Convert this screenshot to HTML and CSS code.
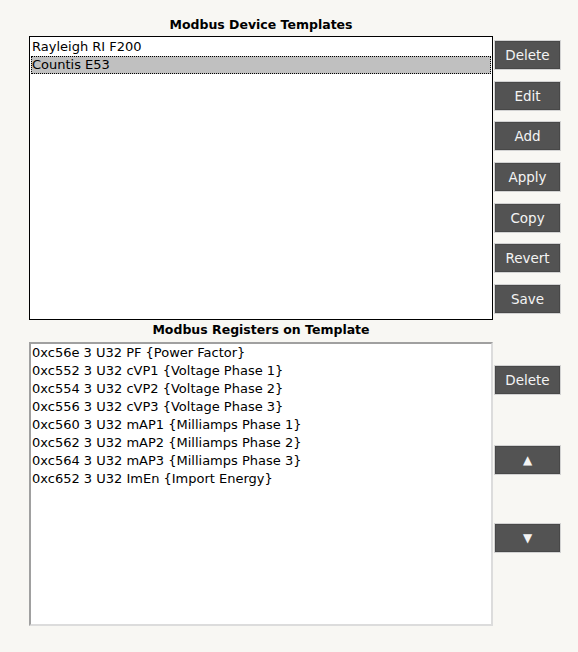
FILE: index.html
```html
<!DOCTYPE html>
<html>
<head>
<meta charset="utf-8">
<link rel="stylesheet" href="styles.css">
</head>
<body>
<div class="page">
  <div class="section">
    <div class="left">
      <div class="title">Modbus Device Templates</div>
      <div class="list list-focus tall1">
        <div class="item">Rayleigh RI F200</div>
        <div class="item selected">Countis E53</div>
      </div>
    </div>
    <div class="buttons b1">
      <button class="btn">Delete</button>
      <button class="btn">Edit</button>
      <button class="btn">Add</button>
      <button class="btn">Apply</button>
      <button class="btn">Copy</button>
      <button class="btn">Revert</button>
      <button class="btn">Save</button>
    </div>
  </div>
  <div class="section">
    <div class="left">
      <div class="title t2">Modbus Registers on Template</div>
      <div class="list list-inset tall2">
        <div class="item">0xc56e 3 U32 PF {Power Factor}</div>
        <div class="item">0xc552 3 U32 cVP1 {Voltage Phase 1}</div>
        <div class="item">0xc554 3 U32 cVP2 {Voltage Phase 2}</div>
        <div class="item">0xc556 3 U32 cVP3 {Voltage Phase 3}</div>
        <div class="item">0xc560 3 U32 mAP1 {Milliamps Phase 1}</div>
        <div class="item">0xc562 3 U32 mAP2 {Milliamps Phase 2}</div>
        <div class="item">0xc564 3 U32 mAP3 {Milliamps Phase 3}</div>
        <div class="item">0xc652 3 U32 ImEn {Import Energy}</div>
      </div>
    </div>
    <div class="buttons b2">
      <button class="btn">Delete</button>
      <button class="btn arrow">&#9650;</button>
      <button class="btn arrow">&#9660;</button>
    </div>
  </div>
</div>
</body>
</html>
```

FILE: styles.css
```css
html, body {
  margin: 0;
  padding: 0;
  background: #f8f7f3;
  font-family: "DejaVu Sans", Verdana, sans-serif;
  font-size: 13px;
  color: #000;
}
.page {
  padding: 15px 0 0 29px;
}
.section {
  display: flex;
  align-items: flex-start;
}
.left {
  width: 464px;
  display: flex;
  flex-direction: column;
}
.title {
  font-weight: bold;
  text-align: center;
  font-size: 12.5px;
  line-height: 20px;
  height: 21px;
}
.t2 {
  height: 21px;
  line-height: 17px;
  padding-top: 1px;
}
.list {
  box-sizing: border-box;
  background: #fff;
  padding: 1px 1px;
}
.list-focus {
  border: 1px solid #000;
}
.list-inset {
  border: 2px solid #dcdcdc;
  border-top-color: #a0a0a0;
  border-left-color: #a0a0a0;
  padding: 0 0;
}
.tall1 { height: 284px; }
.tall2 { height: 284px; }
.item {
  height: 18px;
  line-height: 18px;
  padding-left: 1px;
  white-space: nowrap;
}
.selected {
  background: #c0c0c0;
  outline: 1px dotted #000;
  outline-offset: -1px;
}
.buttons {
  display: flex;
  flex-direction: column;
  margin-left: 1px;
}
.b1 {
  padding-top: 25px;
  gap: 10.67px;
}
.b2 {
  padding-top: 45px;
}
.b2 .btn + .btn { margin-top: 50px; }
.b2 .btn.arrow + .btn.arrow { margin-top: 48px; }
.btn {
  box-sizing: border-box;
  width: 67px;
  height: 30px;
  background: #535353;
  color: #f4f4f4;
  border: 1px solid #d2d2d2;
  box-shadow: inset 0 0 0 1px #484848;
  font-family: "DejaVu Sans", Verdana, sans-serif;
  font-size: 13.5px;
  padding: 0;
  margin: 0;
  text-align: center;
}
.arrow {
  font-size: 12px;
}
```
